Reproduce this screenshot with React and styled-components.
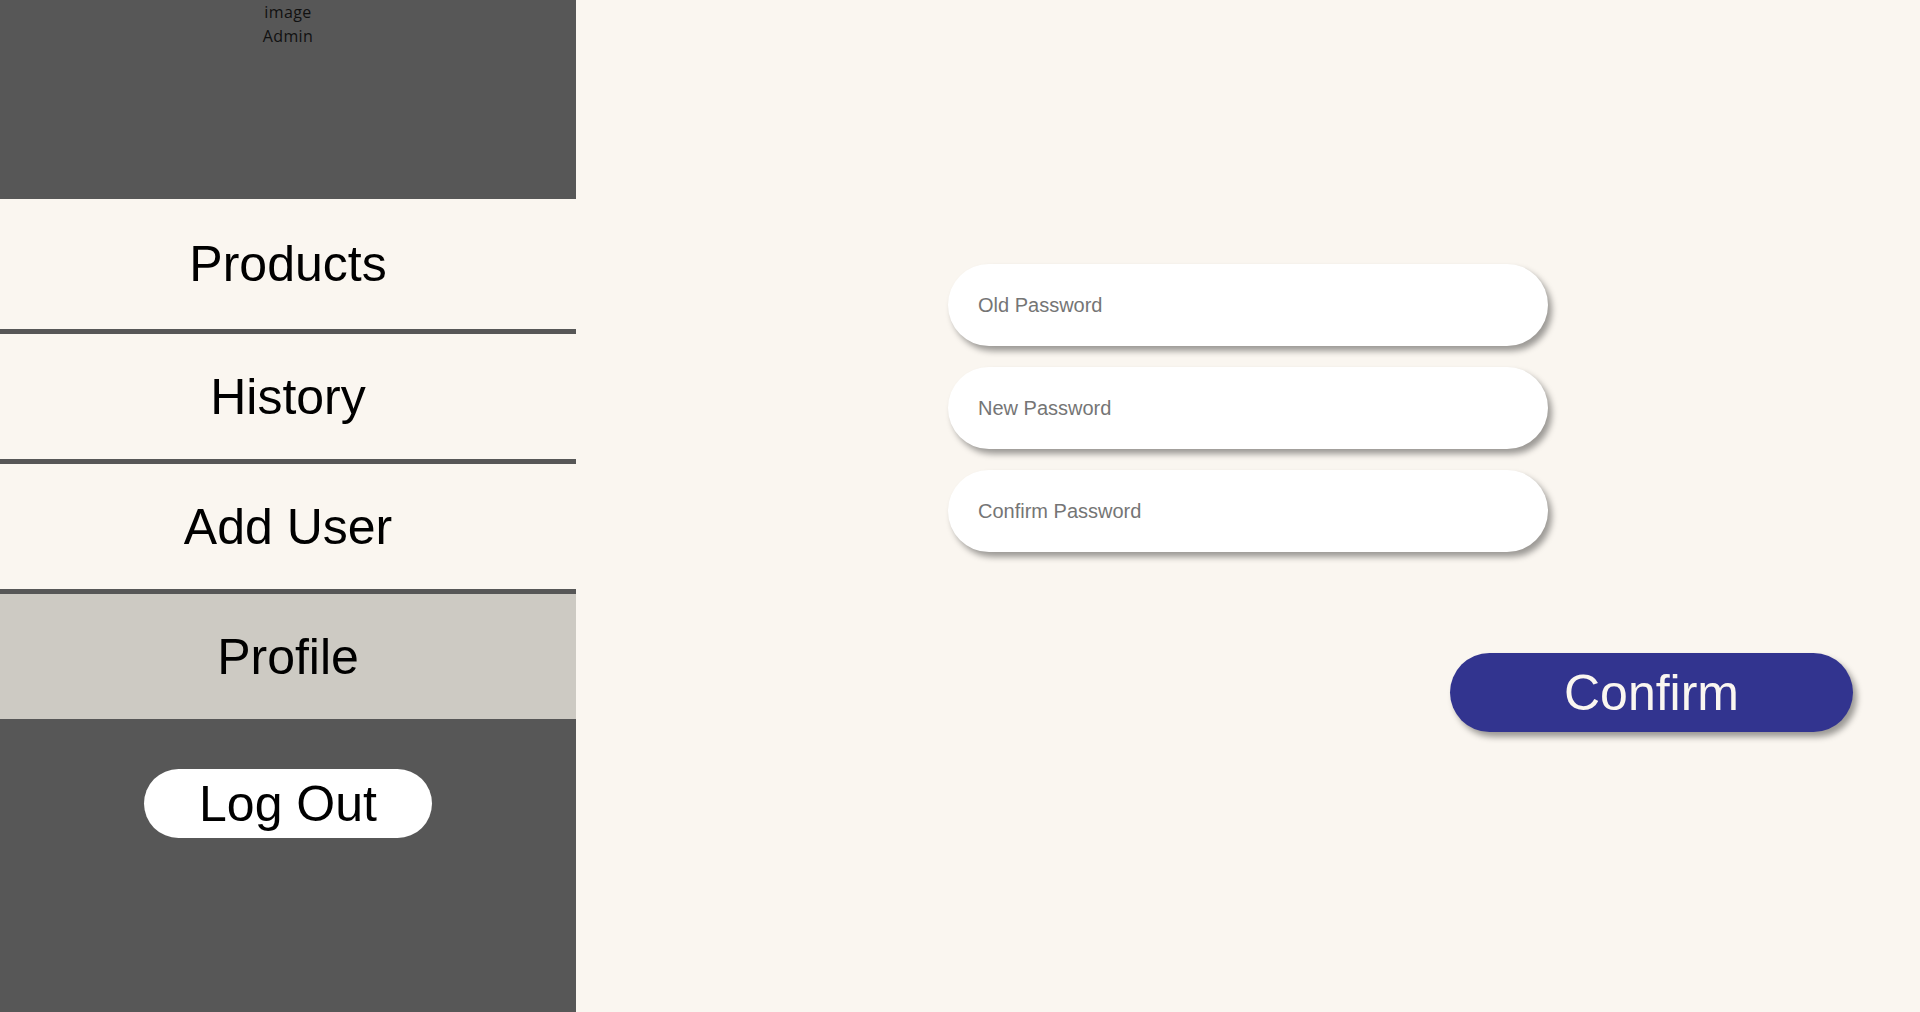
import styled, { createGlobalStyle } from "styled-components";

const GlobalStyle = createGlobalStyle`
  * {
    box-sizing: border-box;
  }
  body {
    margin: 0;
    background-color: #faf6f0;
    font-family: "Liberation Sans", Arial, sans-serif;
  }
`;

const Page = styled.div`
  display: flex;
  width: 100%;
  height: 100vh;
  background-color: #faf6f0;
`;

const Sidebar = styled.aside`
  width: 576px;
  height: 100%;
  background-color: #575757;
  display: flex;
  flex-direction: column;
`;

const Header = styled.div`
  height: 199px;
  display: flex;
  flex-direction: column;
  align-items: center;
  font-family: "Open Sans", sans-serif;
  font-size: 16px;
  letter-spacing: 0.4px;
  line-height: 24px;
  color: #111;
`;

const NavItem = styled.div`
  height: 130px;
  display: flex;
  align-items: center;
  justify-content: center;
  font-size: 50px;
  color: #000;
  background-color: ${(p) => (p.$active ? "#cdcac3" : "#faf6f0")};
  border-top: ${(p) => (p.$first ? "none" : "5px solid #575757")};
  cursor: pointer;
`;

const LogOutButton = styled.button`
  align-self: center;
  margin-top: 50px;
  width: 288px;
  height: 69px;
  border: none;
  border-radius: 35px;
  background-color: #fff;
  color: #000;
  font-family: "Liberation Sans", Arial, sans-serif;
  font-size: 50px;
  cursor: pointer;
`;

const Main = styled.main`
  flex: 1;
  display: flex;
  flex-direction: column;
  align-items: center;
  padding-top: 264px;
`;

const Fields = styled.div`
  width: 600px;
  display: flex;
  flex-direction: column;
  gap: 21px;
`;

const Field = styled.input`
  height: 82px;
  width: 100%;
  border: none;
  outline: none;
  border-radius: 41px;
  background-color: #fff;
  padding: 0 30px;
  font-family: "Liberation Sans", Arial, sans-serif;
  font-size: 20px;
  color: #333;
  box-shadow: 4px 5px 6px rgba(0, 0, 0, 0.38);

  &::placeholder {
    color: #757575;
  }
`;

const Actions = styled.div`
  align-self: stretch;
  display: flex;
  justify-content: flex-end;
  padding-right: 67px;
  margin-top: 101px;
`;

const ConfirmButton = styled.button`
  width: 403px;
  height: 79px;
  border: none;
  border-radius: 40px;
  background-color: #32348f;
  color: #faf6f0;
  font-family: "Liberation Sans", Arial, sans-serif;
  font-size: 50px;
  box-shadow: 4px 5px 6px rgba(0, 0, 0, 0.38);
  cursor: pointer;
`;

const navItems = ["Products", "History", "Add User", "Profile"];

export default function App() {
  return (
    <>
      <GlobalStyle />
      <Page>
        <Sidebar>
          <Header>
            <span>image</span>
            <span>Admin</span>
          </Header>
          {navItems.map((item, i) => (
            <NavItem key={item} $first={i === 0} $active={item === "Profile"}>
              {item}
            </NavItem>
          ))}
          <LogOutButton>Log Out</LogOutButton>
        </Sidebar>
        <Main>
          <Fields>
            <Field type="password" placeholder="Old Password" />
            <Field type="password" placeholder="New Password" />
            <Field type="password" placeholder="Confirm Password" />
          </Fields>
          <Actions>
            <ConfirmButton>Confirm</ConfirmButton>
          </Actions>
        </Main>
      </Page>
    </>
  );
}
